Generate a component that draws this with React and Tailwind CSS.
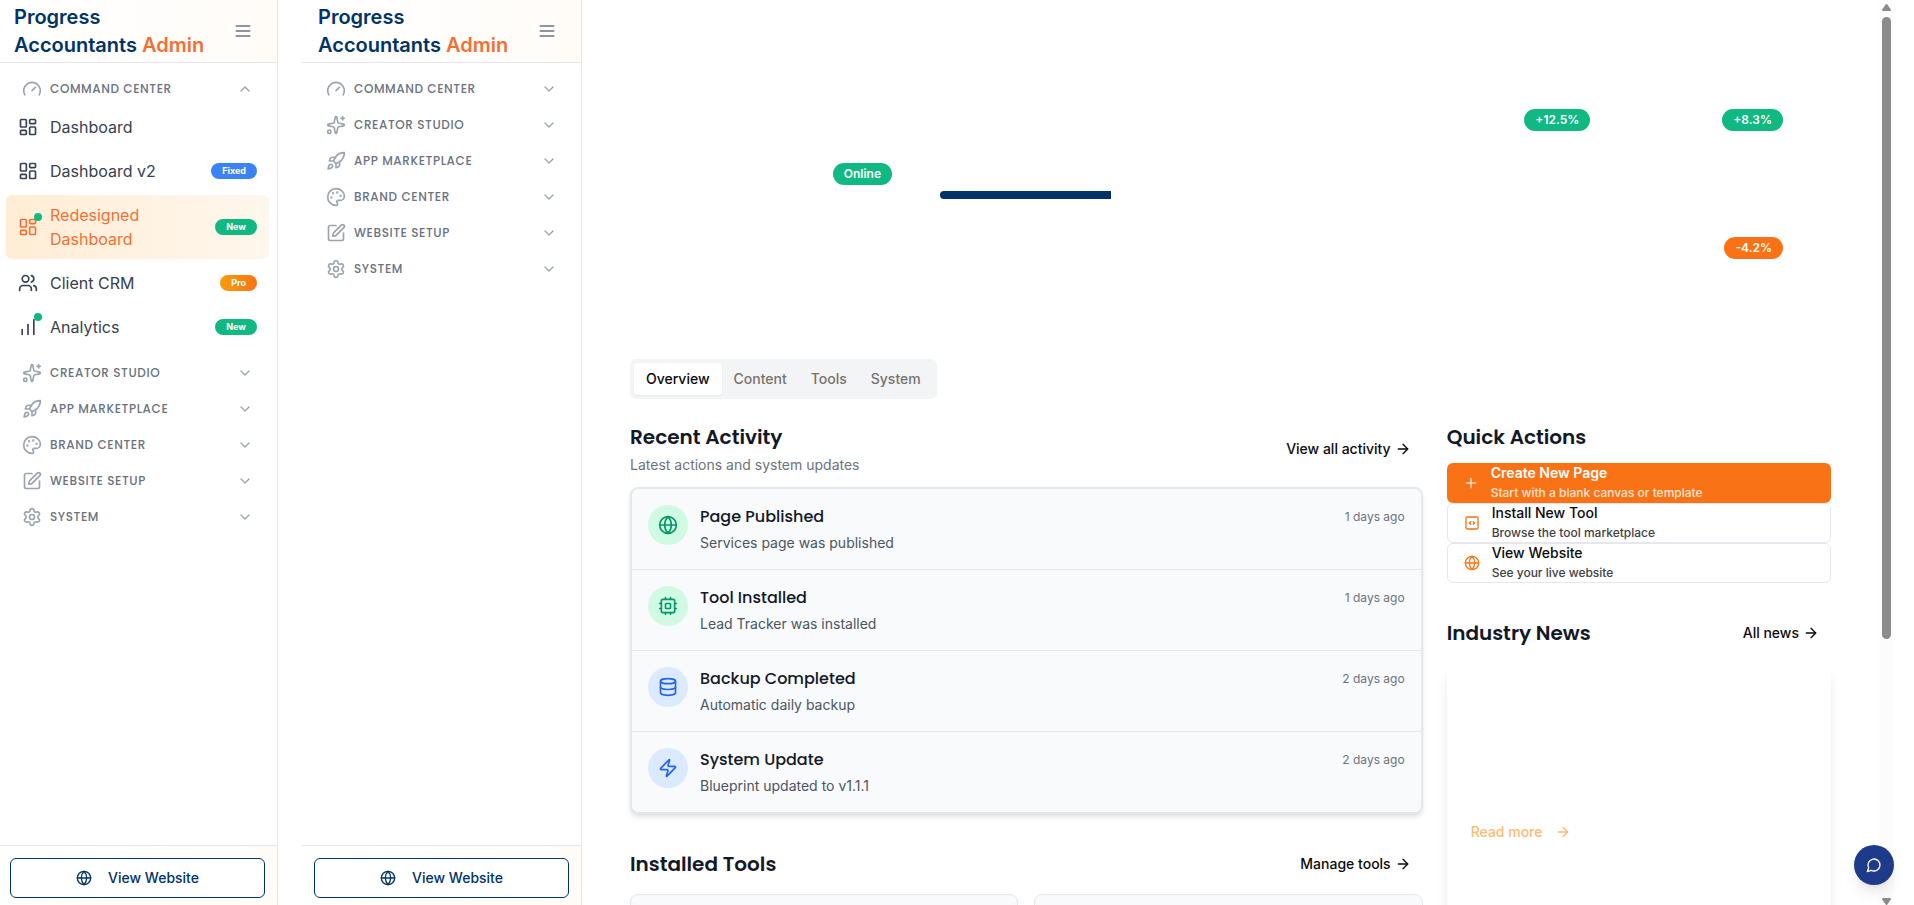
import {
  ArrowRight,
  ChartNoAxesColumnIncreasing,
  ChevronDown,
  ChevronUp,
  Database,
  Gauge,
  Globe,
  LayoutDashboard,
  Palette,
  Plus,
  Rocket,
  Settings,
  Sparkles,
  SquarePen,
  Users,
  Zap,
} from "lucide-react";

const display = "font-['Poppins','Inter',sans-serif]";

function LineIcon({ size = 20, className, children }) {
  return (
    <svg
      width={size}
      height={size}
      viewBox="0 0 24 24"
      fill="none"
      stroke="currentColor"
      strokeWidth="2"
      strokeLinecap="round"
      strokeLinejoin="round"
      aria-hidden="true"
      className={className}
    >
      {children}
    </svg>
  );
}

function MenuIcon(props) {
  return (
    <LineIcon {...props}>
      <path d="M4 6h16M4 12h16M4 18h16" />
    </LineIcon>
  );
}

function CpuIcon(props) {
  return (
    <LineIcon {...props}>
      <rect x="4" y="4" width="16" height="16" rx="2" />
      <rect x="9" y="9" width="6" height="6" rx="1" />
      <path d="M15 2v2M15 20v2M2 15h2M2 9h2M20 15h2M20 9h2M9 2v2M9 20v2" />
    </LineIcon>
  );
}

function CodeIcon(props) {
  return (
    <LineIcon {...props}>
      <path d="m10 10-2 2 2 2M14 14l2-2-2-2" />
      <rect x="3" y="3" width="18" height="18" rx="2" />
    </LineIcon>
  );
}

function ChatIcon(props) {
  return (
    <LineIcon {...props}>
      <path d="M7.9 20A9 9 0 1 0 4 16.1L2 22Z" />
    </LineIcon>
  );
}

const sections = [
  { label: "Command Center", icon: Gauge },
  { label: "Creator Studio", icon: Sparkles },
  { label: "App Marketplace", icon: Rocket },
  { label: "Brand Center", icon: Palette },
  { label: "Website Setup", icon: SquarePen },
  { label: "System", icon: Settings },
];

const commandItems = [
  { label: "Dashboard", icon: LayoutDashboard },
  { label: "Dashboard v2", icon: LayoutDashboard, badge: "Fixed", tone: "bg-[#3b82f6]" },
  { label: "Redesigned Dashboard", icon: LayoutDashboard, badge: "New", tone: "bg-[#10b981]", dot: true, active: true },
  { label: "Client CRM", icon: Users, badge: "Pro", tone: "bg-linear-to-r from-[#f59e0b] to-[#f97316]" },
  { label: "Analytics", icon: ChartNoAxesColumnIncreasing, badge: "New", tone: "bg-[#10b981]", dot: true },
];

const activity = [
  { title: "Page Published", text: "Services page was published", when: "1 days ago", icon: Globe, tone: "bg-[#d1fae5] text-[#059669]" },
  { title: "Tool Installed", text: "Lead Tracker was installed", when: "1 days ago", icon: CpuIcon, tone: "bg-[#d1fae5] text-[#059669]" },
  { title: "Backup Completed", text: "Automatic daily backup", when: "2 days ago", icon: Database, tone: "bg-[#dbeafe] text-[#2563eb]" },
  { title: "System Update", text: "Blueprint updated to v1.1.1", when: "2 days ago", icon: Zap, tone: "bg-[#dbeafe] text-[#2563eb]" },
];

function NavItem({ item }) {
  const Icon = item.icon;
  return (
    <a
      href="#"
      className={
        item.active
          ? "flex items-center gap-3 rounded-md bg-linear-to-r from-[#ffedd5] to-[#fff7ed] px-3 py-2 text-[#f27036]"
          : "flex items-center gap-3 rounded-md px-3 py-2 text-[#374151]"
      }
    >
      <span className="relative shrink-0">
        <Icon size={20} />
        {item.dot && <span className="absolute -top-1 -right-1 size-2 rounded-full bg-[#10b981]" />}
      </span>
      <span className="flex-1 text-base">{item.label}</span>
      {item.badge && (
        <span className={`rounded-full px-[11px] text-[9px] leading-4 font-bold text-white ${item.tone}`}>
          {item.badge}
        </span>
      )}
    </a>
  );
}

function Sidebar({ open }) {
  return (
    <aside className="flex w-[280px] shrink-0 flex-col border-r border-[#e5e7eb] bg-white">
      <header className="flex h-[63px] items-center justify-between border-b border-[#e5e7eb] bg-linear-to-r from-white to-[#fffcf8] pr-6 pl-4">
        <h1 className="text-xl leading-7 font-semibold text-[#003366]">
          Progress
          <br />
          Accountants <span className="text-[#f27036]">Admin</span>
        </h1>
        <button type="button" aria-label="Toggle sidebar" className="text-[#6b7280]">
          <MenuIcon />
        </button>
      </header>
      <nav className="flex-1 p-2">
        {sections.map(({ label, icon: Icon }, i) => {
          const expanded = open && i === 0;
          return (
            <div key={label}>
              <button
                type="button"
                aria-expanded={expanded}
                className={`flex w-full items-center gap-2 px-4 py-2 text-left text-[#9ca3af] ${display}`}
              >
                <Icon size={20} />
                <span className="flex-1 text-xs leading-5 font-medium tracking-wider text-[#6b7280] uppercase">
                  {label}
                </span>
                {expanded ? <ChevronUp size={16} /> : <ChevronDown size={16} />}
              </button>
              {expanded && (
                <div className="mb-2 flex flex-col gap-1">
                  {commandItems.map((item) => (
                    <NavItem key={item.label} item={item} />
                  ))}
                </div>
              )}
            </div>
          );
        })}
      </nav>
      <footer className="border-t border-[#e5e7eb] bg-linear-to-r from-white to-[#fffcf8] px-3 pt-3 pb-[7px]">
        <a
          href="#"
          className="flex h-10 items-center justify-center gap-4 rounded-md border border-[#003366] bg-white text-sm font-medium text-[#003366]"
        >
          <Globe size={16} />
          View Website
        </a>
      </footer>
    </aside>
  );
}

function Pill({ tone, children }) {
  return (
    <span className={`rounded-full px-[11px] py-[3px] text-xs leading-4 font-semibold text-white ${tone}`}>
      {children}
    </span>
  );
}

function Heading({ children }) {
  return <h2 className={`text-xl leading-7 font-semibold text-[#111827] ${display}`}>{children}</h2>;
}

function MoreButton({ children }) {
  return (
    <button type="button" className="flex h-9 items-center gap-1 px-3 text-sm font-medium text-[#0c0a09]">
      {children}
      <ArrowRight size={16} />
    </button>
  );
}

function QuickAction({ icon: Icon, title, text, primary }) {
  return (
    <button
      type="button"
      className={
        primary
          ? "flex h-10 items-center gap-3 rounded-md bg-[#f97316] px-4 text-left font-semibold text-white"
          : "flex h-10 items-center gap-3 rounded-md border border-[#e5e7eb] bg-white px-4 text-left font-medium text-[#0c0a09]"
      }
    >
      <Icon size={16} className={primary ? "text-white/80" : "text-[#f97316]"} />
      <span className="flex flex-col">
        <span className="text-sm leading-5">{title}</span>
        <span
          className={
            primary ? "text-xs leading-5 font-medium text-white/80" : "text-xs leading-5 text-[#3f3f46]"
          }
        >
          {text}
        </span>
      </span>
    </button>
  );
}

function StatusHeader() {
  return (
    <section className="flex items-start pt-[109px] pr-12 pb-[100px]">
      <div className="mt-[54px] flex w-[262px] justify-end">
        <Pill tone="bg-[#10b981]">Online</Pill>
      </div>
      <div className="mt-[82px] ml-12 h-2 w-[228px] overflow-hidden rounded-full">
        <div className="h-full w-3/4 bg-[#003366]" />
      </div>
      <div className="ml-auto grid grid-cols-[auto_auto] justify-items-end gap-x-[132px] gap-y-[106px]">
        <Pill tone="bg-[#10b981]">+12.5%</Pill>
        <Pill tone="bg-[#10b981]">+8.3%</Pill>
        <span />
        <Pill tone="bg-[#f97316]">-4.2%</Pill>
      </div>
    </section>
  );
}

function Tabs() {
  const tabs = ["Overview", "Content", "Tools", "System"];
  return (
    <div role="tablist" className="inline-flex h-10 items-center self-start rounded-md bg-[#f3f4f6] p-1">
      {tabs.map((tab, i) => (
        <button
          key={tab}
          type="button"
          role="tab"
          aria-selected={i === 0}
          className={
            i === 0
              ? "rounded-sm bg-white px-3 py-1.5 text-sm font-medium text-[#0c0a09] shadow-xs"
              : "rounded-sm px-3 py-1.5 text-sm font-medium text-[#78716c]"
          }
        >
          {tab}
        </button>
      ))}
    </div>
  );
}

function RecentActivity() {
  return (
    <section>
      <div className="mb-3 flex items-center justify-between">
        <div>
          <Heading>Recent Activity</Heading>
          <p className="mt-1 text-sm text-[#6b7280]">Latest actions and system updates</p>
        </div>
        <MoreButton>View all activity</MoreButton>
      </div>
      <ul className="divide-y divide-[#e5e7eb] rounded-lg border-2 border-[#e5e7eb] bg-[#f9fafb] shadow-md">
        {activity.map(({ title, text, when, icon: Icon, tone }) => (
          <li key={title} className="flex items-start gap-3 p-4">
            <span className={`flex size-10 shrink-0 items-center justify-center rounded-full ${tone}`}>
              <Icon size={20} />
            </span>
            <div className="flex-1">
              <h3 className={`text-base font-medium text-[#111827] ${display}`}>{title}</h3>
              <p className="mt-1 text-sm text-[#4b5563]">{text}</p>
            </div>
            <time className="text-xs leading-6 text-[#6b7280]">{when}</time>
          </li>
        ))}
      </ul>
    </section>
  );
}

function InstalledTools() {
  return (
    <section className="mt-8">
      <div className="mb-3 flex items-center justify-between">
        <Heading>Installed Tools</Heading>
        <MoreButton>Manage tools</MoreButton>
      </div>
      <div className="grid grid-cols-2 gap-4">
        <div className="h-32 rounded-lg border border-[#e5e7eb] bg-[#f9fafb]" />
        <div className="h-32 rounded-lg border border-[#e5e7eb] bg-[#f9fafb]" />
      </div>
    </section>
  );
}

function SideColumn() {
  return (
    <div>
      <section>
        <Heading>Quick Actions</Heading>
        <div className="mt-3 flex flex-col">
          <QuickAction primary icon={Plus} title="Create New Page" text="Start with a blank canvas or template" />
          <QuickAction icon={CodeIcon} title="Install New Tool" text="Browse the tool marketplace" />
          <QuickAction icon={Globe} title="View Website" text="See your live website" />
        </div>
      </section>
      <section className="mt-8">
        <div className="mb-3 flex items-center justify-between">
          <Heading>Industry News</Heading>
          <MoreButton>All news</MoreButton>
        </div>
        <article className="rounded-lg bg-white px-6 pt-[156px] pb-32 shadow-lg">
          <a href="#" className="inline-flex items-center gap-3 text-sm font-medium text-[#fdba74]">
            Read more
            <ArrowRight size={16} />
          </a>
        </article>
      </section>
    </div>
  );
}

function ScrollTrack() {
  return (
    <div aria-hidden="true" className="mr-5 flex w-[15px] shrink-0 flex-col items-center bg-[#fcfcfc]">
      <svg viewBox="0 0 9 7" className="mt-1 h-[7px] w-[9px] shrink-0 fill-[#8b8b8b]">
        <path d="M3.7.6a1 1 0 0 1 1.6 0L8.8 5.6Q9.2 7 8 7H1Q-.2 7 .2 5.6Z" />
      </svg>
      <div className="mt-[6px] h-[622px] w-[9px] shrink-0 rounded-full bg-[#8b8b8b]" />
      <svg viewBox="0 0 9 7" className="mt-auto h-[7px] w-[9px] shrink-0 fill-[#8b8b8b]">
        <path d="M3.7 6.4a1 1 0 0 0 1.6 0L8.8 1.4Q9.2 0 8 0H1Q-.2 0 .2 1.4Z" />
      </svg>
    </div>
  );
}

export default function App() {
  return (
    <div className="h-screen overflow-hidden bg-white font-['Inter',sans-serif]">
      <div className="-ml-0.5 flex h-full">
        <Sidebar open />
        <div className="w-6 shrink-0" />
        <Sidebar />
        <main className="flex min-w-0 flex-1 flex-col overflow-hidden px-12">
          <StatusHeader />
          <Tabs />
          <div className="mt-6 grid grid-cols-3 gap-6">
            <div className="col-span-2">
              <RecentActivity />
              <InstalledTools />
            </div>
            <SideColumn />
          </div>
        </main>
        <ScrollTrack />
      </div>
      <button
        type="button"
        aria-label="Open chat"
        className="fixed right-5 bottom-5 flex size-10 items-center justify-center rounded-full bg-[#1e3a8a] text-white shadow-lg"
      >
        <ChatIcon size={16} />
      </button>
    </div>
  );
}
